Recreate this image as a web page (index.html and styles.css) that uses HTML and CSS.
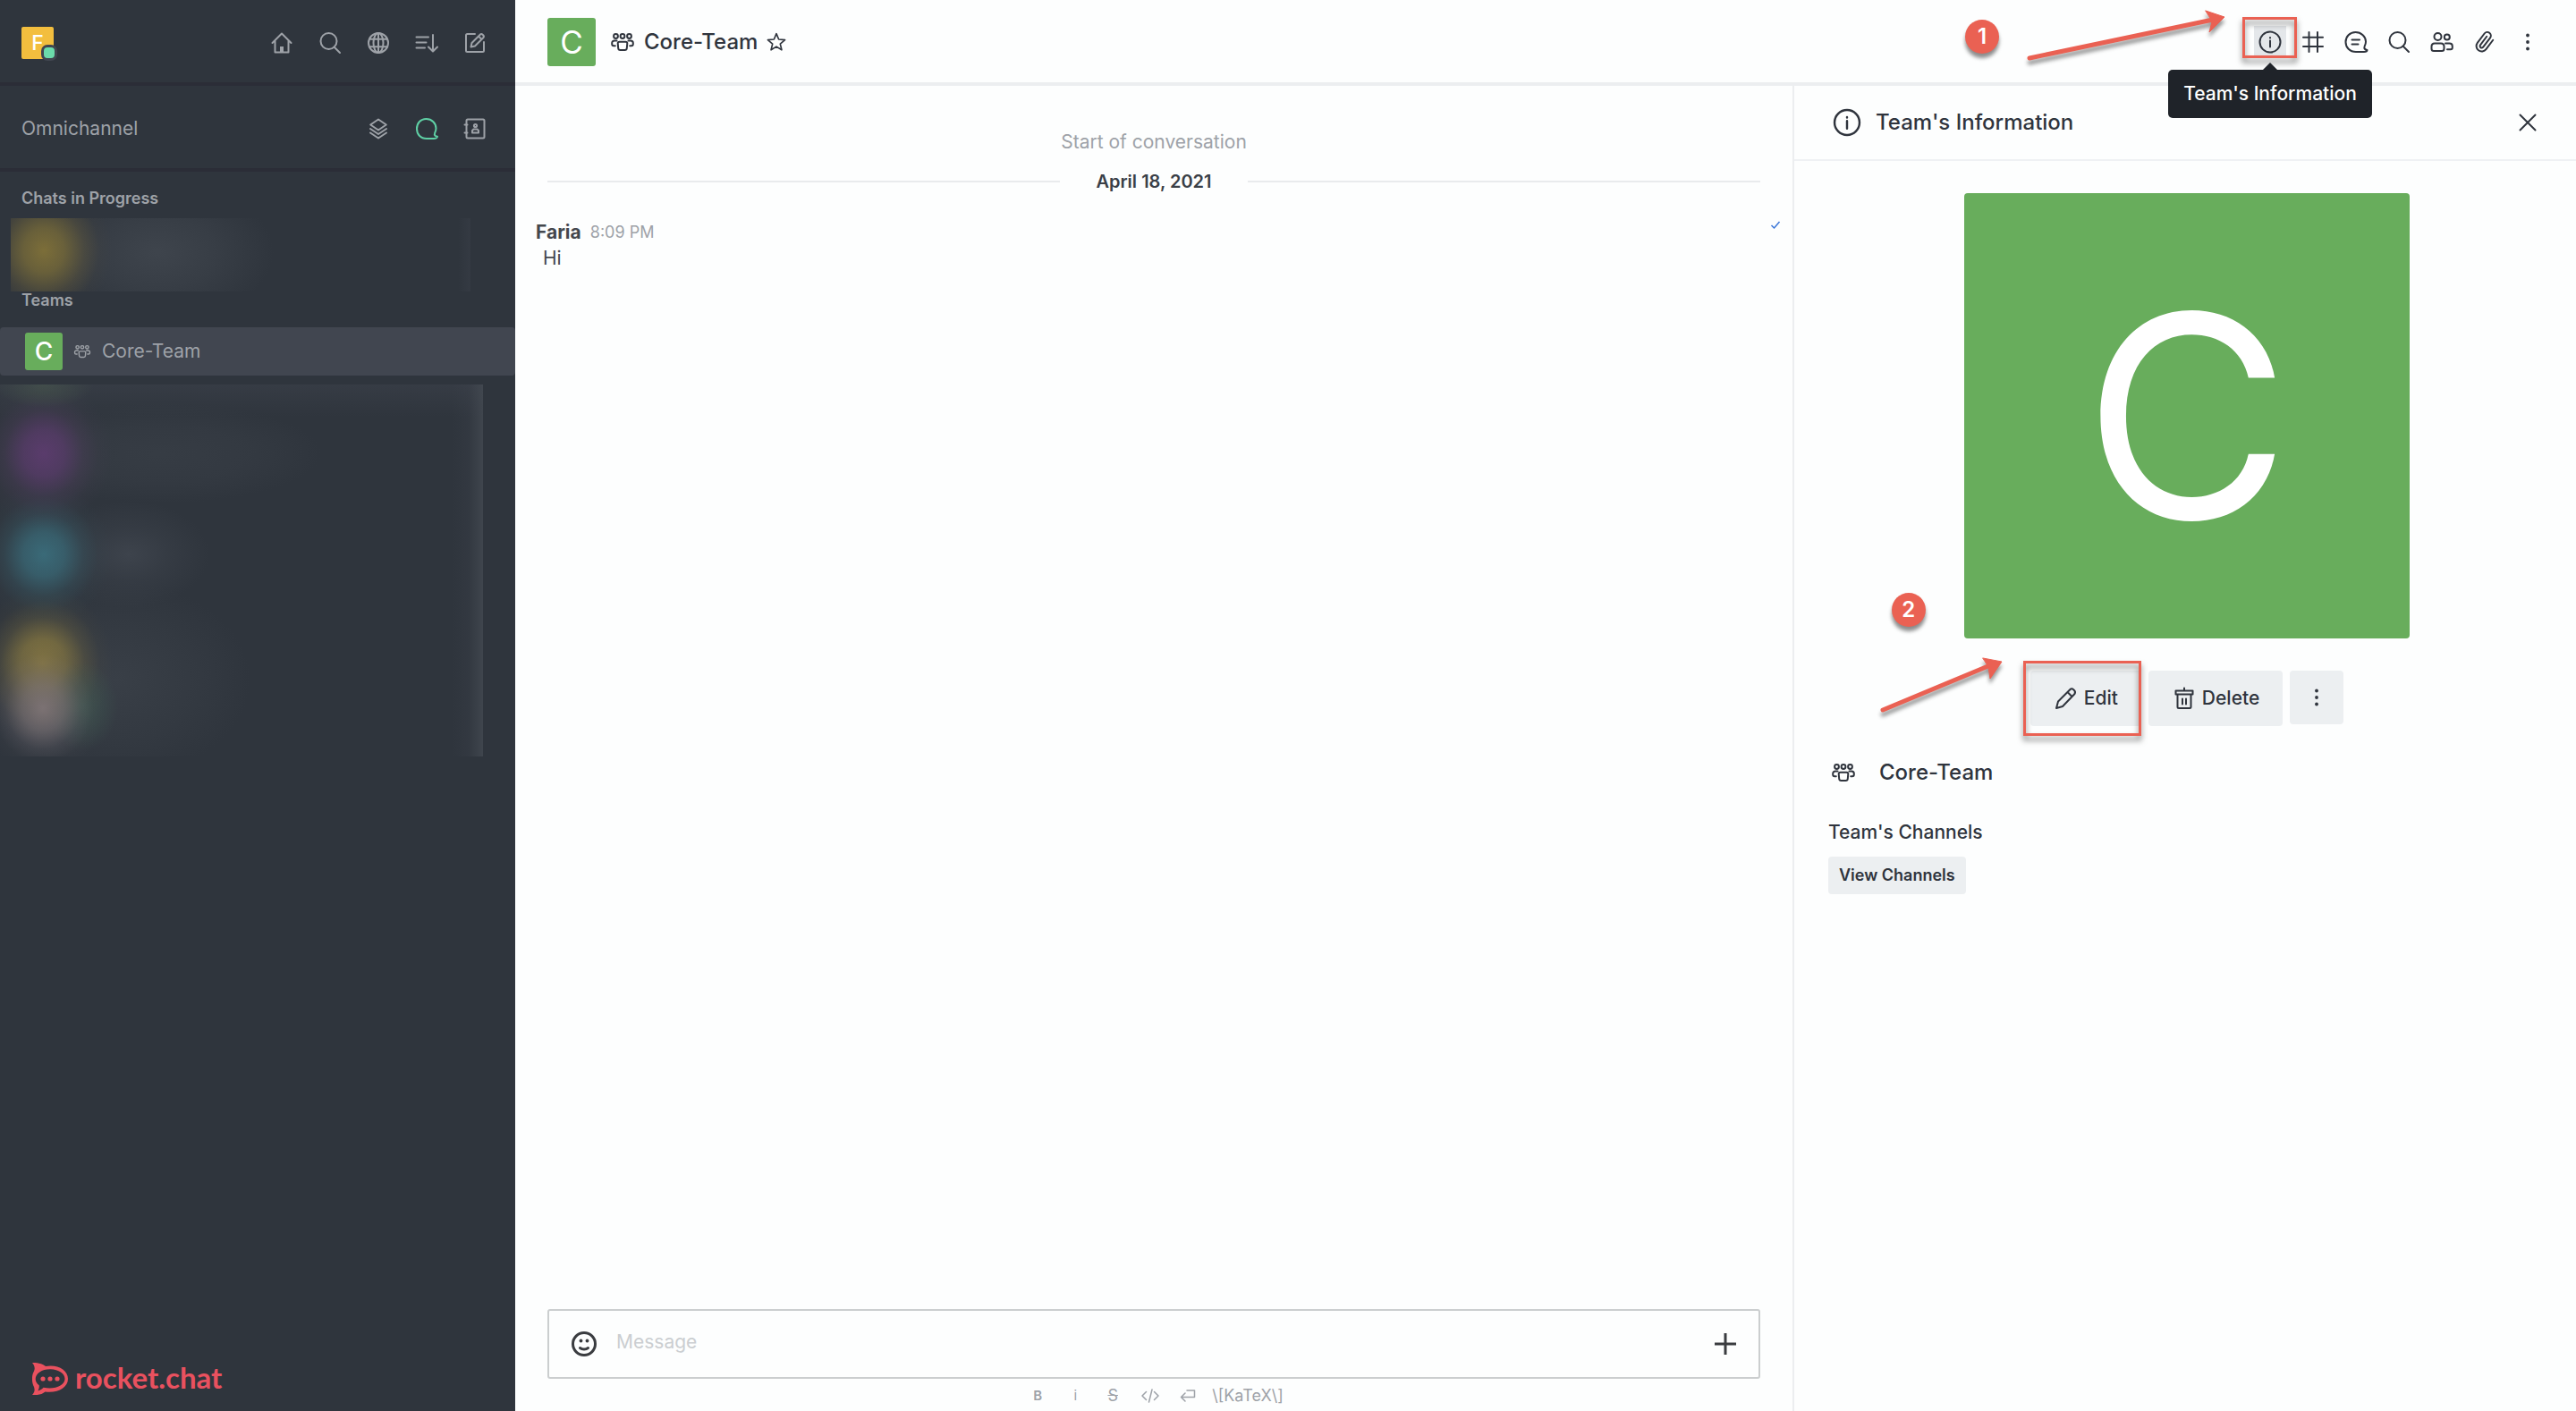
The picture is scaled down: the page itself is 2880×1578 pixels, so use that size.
FILE: index.html
```
<!DOCTYPE html>
<html lang="en">
<head>
<meta charset="utf-8">
<meta name="viewport" content="width=device-width, initial-scale=1">
<title>Core-Team</title>
<link rel="stylesheet" href="styles.css">
</head>
<body>
<svg class="sprite" aria-hidden="true">
  <symbol id="team" viewBox="0 0 28 28">
    <circle cx="6.5" cy="7.5" r="2.4"/><circle cx="14" cy="7.5" r="2.4"/><circle cx="21.5" cy="7.5" r="2.4"/>
    <path d="M10.5 13.8h7c1.200 0 1.800.6 1.800 1.600l-.5 5.600c-.1 1.400-1 2-2.300 2h-5c-1.300 0-2.200-.6-2.300-2l-.5-5.600c0-1 .6-1.600 1.800-1.600zM7.500 12.500H5c-1.800 0-2.800 1-2.800 2.600v1.200c0 1.300.8 2 2 2h1.600M20.500 12.500H23c1.800 0 2.800 1 2.800 2.600v1.200c0 1.300-.8 2-2 2h-1.600"/>
  </symbol>
  <symbol id="search" viewBox="0 0 28 28"><circle cx="12.500" cy="12" r="9"/><path d="M18.500 18.500l6.500 6.500"/></symbol>
  <symbol id="info" viewBox="0 0 28 28"><circle cx="14" cy="14" r="11.500"/><path d="M14 12.500v7M14 9v.4"/></symbol>
  <symbol id="kebab" viewBox="0 0 28 28"><g fill="currentColor" stroke="none"><circle cx="14" cy="6.500" r="1.900"/><circle cx="14" cy="14" r="1.900"/><circle cx="14" cy="21.500" r="1.900"/></g></symbol>
</svg>

<div class="app">
  <aside class="sidebar">
    <header class="side-bar">
      <button class="me" aria-label="My account">F<span class="presence"></span></button>
      <nav class="side-tools">
        <button aria-label="Home"><svg class="icon" viewBox="0 0 28 28"><path d="M3.500 14L14 3.500 24.500 14M6.500 12v12.500h15V12"/><path d="M12 24.500v-6.500h4v6.500z" fill="currentColor" stroke="none"/></svg></button>
        <button aria-label="Search"><svg class="icon"><use href="#search"/></svg></button>
        <button aria-label="Directory"><svg class="icon" viewBox="0 0 28 28"><circle cx="14" cy="14" r="11"/><ellipse cx="14" cy="14" rx="5.500" ry="11"/><path d="M14 3v22M4 9.800h20M4 18.200h20"/></svg></button>
        <button aria-label="Sort"><svg class="icon" viewBox="0 0 28 28"><path d="M2.500 7.500h13.500M2.500 13.500h11M2.500 19.500h9.500M21 5v18M16 18.500l5 5 5-5"/></svg></button>
        <button aria-label="Create new"><svg class="icon" viewBox="0 0 28 28"><path d="M14 4H5.500C4.500 4 4 4.500 4 5.500v17c0 1 .5 1.500 1.500 1.500h17c1 0 1.500-.5 1.500-1.500V13M9.500 18.500l1-4.500L20 4.500c1.500-1.500 5 1.500 3.500 3.500L14 17.500zM18 6.500l3.500 3.500"/></svg></button>
      </nav>
    </header>
    <section class="side-bar">
      <h2 class="omni">Omnichannel</h2>
      <nav class="side-tools">
        <button aria-label="Queue"><svg class="icon" viewBox="0 0 28 28"><path d="M14 3.500l8.800 6L14 15.500l-8.800-6zM5 14l9 6 9-6M5 18.500l9 6 9-6"/></svg></button>
        <button class="on" aria-label="Available for chats"><svg class="icon" viewBox="0 0 28 28"><path d="M13.500 3C7 3 3 8 3 14s4 11 11 11h8c2 0 4-1 4-2.200-2-.3-4-1.300-2.800-4.300C24 17 24.500 15 24.500 13.500 24.500 8 20 3 13.500 3z"/></svg></button>
        <button aria-label="Contacts"><svg class="icon" viewBox="0 0 28 28"><rect x="4.500" y="3.500" width="20" height="21" rx="1.500"/><path d="M2.500 9.500h3M2.500 18.500h3"/><circle cx="14.500" cy="10.500" r="1.600"/><path d="M12.500 14.500h4l1.500 1.500v2.500h-7V16z"/></svg></button>
      </nav>
    </section>
    <div class="rooms">
      <h3 class="group">Chats in Progress</h3>
      <div class="redacted one"></div>
      <h3 class="group">Teams</h3>
      <a class="room" href="#core-team">
        <span class="avatar small">C</span>
        <svg class="icon tiny"><use href="#team"/></svg>
        <span>Core-Team</span>
      </a>
      <div class="redacted many"></div>
    </div>
    <footer class="brand">
      <svg class="logo" viewBox="0 0 40 36" aria-hidden="true"><path fill-rule="evenodd" fill="currentColor" d="M0 0C6-.4 12 1.500 15 4 28 1.500 40 8 40 18S28 34.500 14.500 32.500C11 35.500 6 36.500 0 36c3-3 3-6 2-9C-.8 22-.8 14 2 9.500 3.500 6 2.500 3 0 0zM20.500 7.200C11 7 3.700 12 3.700 18c0 3 1.500 5.500 4 7.200.4 2.200-.2 4.200-1.300 6.300 2.800-.6 4.500-2 6.200-3.700C25 30.500 36.500 25.500 36.500 18c0-6-7-10.700-16-10.800z"/><g fill="currentColor"><circle cx="12" cy="18" r="2.600"/><circle cx="20" cy="18" r="2.600"/><circle cx="28" cy="18" r="2.600"/></g></svg>
      <span>rocket.chat</span>
    </footer>
  </aside>

  <main class="main">
    <header class="room-head">
      <span class="avatar medium">C</span>
      <div class="room-title">
        <svg class="icon"><use href="#team"/></svg>
        <h1>Core-Team</h1>
        <button aria-label="Favorite"><svg class="icon star" viewBox="0 0 20 20"><path d="M10 1.500l2.400 5.800 6.300.5-4.800 4.100 1.500 6.100L10 14.700 4.600 18l1.500-6.100L1.300 7.800l6.300-.5z"/></svg></button>
      </div>
      <span class="marker first">1</span>
      <svg class="arrow first" viewBox="0 0 240 80" aria-hidden="true"><path d="M9 65L214 22" stroke-width="5"/><path class="tip" d="M206 12l21 7-17 17 3-12z"/></svg>
      <nav class="room-tools">
        <button class="active" aria-label="Team's Information" aria-describedby="tip"><svg class="icon"><use href="#info"/></svg><span class="frame info-frame"></span><span class="tooltip" id="tip" role="tooltip">Team's Information</span></button>
        <button aria-label="Channels"><svg class="icon" viewBox="0 0 28 28"><path d="M9.500 3v22M19 3v22M3 8.700h22M3 19h22"/></svg></button>
        <button aria-label="Threads"><svg class="icon" viewBox="0 0 28 28"><path d="M13.500 3C7 3 2.500 8 2.500 14s4.500 11 11.500 11h9c2 0 3.500-.8 3.500-2-2-.3-4-1.500-2.800-4.500.8-1.500 1.300-3.500 1.300-5C25 8 20 3 13.500 3zM9.500 11.500h8.500M9.500 16.500h7"/></svg></button>
        <button aria-label="Search messages"><svg class="icon"><use href="#search"/></svg></button>
        <button aria-label="Members"><svg class="icon" viewBox="0 0 28 28"><circle cx="9.500" cy="8" r="4"/><circle cx="19.800" cy="8.500" r="3"/><path d="M6 15.500h7c2.300 0 3.500 1.200 3.500 3.500v2.500c0 1.500-1 2.500-2.500 2.500H5c-1.500 0-2.500-1-2.500-2.500V19c0-2.300 1.200-3.500 3.500-3.500zM18 15.500h4.500c2 0 3.300 1.200 3.300 3.200v1.500c0 1.300-.8 2-2 2H20"/></svg></button>
        <button aria-label="Files"><svg class="icon" viewBox="0 0 28 28"><path transform="rotate(-8 14 14) translate(2 2)" d="M21.440 11.050l-9.190 9.190a6 6 0 0 1-8.490-8.490l9.190-9.190a4 4 0 0 1 5.660 5.660l-9.200 9.190a2 2 0 0 1-2.830-2.830l8.490-8.480"/></svg></button>
        <button aria-label="More"><svg class="icon"><use href="#kebab"/></svg></button>
      </nav>
    </header>

    <section class="chat">
      <p class="start">Start of conversation</p>
      <div class="day"><span>April 18, 2021</span></div>
      <article class="message">
        <div class="message-head">
          <strong>Faria</strong><time>8:09 PM</time>
          <svg class="read" viewBox="0 0 12 12" aria-label="Read"><path d="M1.500 6l3 3 6-7"/></svg>
        </div>
        <p>Hi</p>
      </article>
      <form class="composer">
        <button type="button" aria-label="Emoji"><svg class="icon bold" viewBox="0 0 28 28"><circle cx="14" cy="14" r="12.500"/><path d="M9.500 18.500c2.500 2 6.500 2 9 0"/><g fill="currentColor" stroke="none"><circle cx="10.500" cy="10.500" r="1.900"/><circle cx="17.500" cy="10.500" r="1.900"/></g></svg></button>
        <input type="text" placeholder="Message" aria-label="Message">
        <button type="button" aria-label="Add"><svg class="icon plus bold" viewBox="0 0 24 24"><path d="M12 0v24M0 12h24"/></svg></button>
      </form>
      <div class="format">
        <button aria-label="Bold"><b>B</b></button>
        <button aria-label="Italic">i</button>
        <button aria-label="Strike"><s>S</s></button>
        <button aria-label="Code"><svg class="icon mini" viewBox="0 0 20 16"><path d="M5.500 3.500L1 8l4.500 4.500M14.500 3.500L19 8l-4.500 4.500M12 1L8.500 15"/></svg></button>
        <button aria-label="Multi-line"><svg class="icon mini" viewBox="0 0 20 16"><path d="M9 2h8.500v7.500H3M7 5L2.500 9.500 7 14"/></svg></button>
        <a href="#katex">\[KaTeX\]</a>
      </div>
    </section>

    <aside class="panel">
      <header class="panel-head">
        <svg class="icon big"><use href="#info"/></svg>
        <h2>Team's Information</h2>
        <button aria-label="Close"><svg class="icon" viewBox="0 0 28 28"><path d="M5.500 5.500l17 17M22.500 5.500l-17 17"/></svg></button>
      </header>
      <div class="panel-body">
        <span class="avatar large">C</span>
        <div class="actions">
          <span class="marker second">2</span>
          <svg class="arrow second" viewBox="0 0 160 85" aria-hidden="true"><path d="M10 69L130 19" stroke-width="5"/><path class="tip" d="M122 11l21 4-13 19-2-13z"/></svg>
          <button class="btn"><svg class="icon" viewBox="0 0 28 28"><path d="M3 25l2-7.500L18.500 4c2-2 7 1.500 5 5L10 23zM15.500 7l5 5"/></svg>Edit<span class="frame edit-frame"></span></button>
          <button class="btn"><svg class="icon" viewBox="0 0 28 28"><path d="M4.500 5.500h19v4h-19zM6.500 9.500v14c0 1 .5 1.500 1.500 1.500h12c1 0 1.500-.5 1.500-1.500v-14M14 5.500v-3M12 14.500v6M16 14.500v6"/></svg>Delete</button>
          <button class="btn square" aria-label="More"><svg class="icon"><use href="#kebab"/></svg></button>
        </div>
        <div class="team-name"><svg class="icon"><use href="#team"/></svg><h3>Core-Team</h3></div>
        <h4>Team's Channels</h4>
        <button class="btn compact">View Channels</button>
      </div>
    </aside>
  </main>
</div>
</body>
</html>
```
FILE: styles.css
```
* { box-sizing: border-box; }
body {
  margin: 0;
  font-family: Inter, "Liberation Sans", sans-serif;
  font-size: 21px;
  line-height: 28px;
  color: #2f343d;
  background: #fdfefe;
}
h1, h2, h3, h4, p { margin: 0; font-size: inherit; font-weight: inherit; }
button {
  position: relative;
  display: flex;
  align-items: center;
  justify-content: center;
  padding: 0;
  border: 0;
  background: none;
  color: inherit;
  font: inherit;
}
a { color: inherit; text-decoration: none; }
.sprite { display: none; }
.icon {
  flex: none;
  width: 28px;
  height: 28px;
  fill: none;
  stroke: currentColor;
  stroke-width: 2;
  stroke-linecap: round;
  stroke-linejoin: round;
}
.icon.tiny { width: 20px; height: 20px; }
.icon.big { width: 34px; height: 34px; }
.icon.star { width: 22px; height: 22px; stroke-width: 1.5; }
.icon.bold { stroke-width: 3; }
.icon.plus { width: 24px; height: 24px; stroke-linecap: butt; }
.icon.mini { width: 20px; height: 16px; stroke-width: 1.5; }

.app { display: grid; grid-template-columns: 576px 1fr; min-height: 100vh; }

/* Sidebar */
.sidebar {
  display: flex;
  flex-direction: column;
  background: #2f353d;
  color: #9ea2a8;
}
.side-bar {
  display: flex;
  align-items: center;
  justify-content: space-between;
  height: 96px;
  padding: 3px 31px 0 24px;
  border-bottom: 4px solid #2b2d37;
}
.side-tools { display: flex; gap: 26px; }
.side-tools .on { color: #5fd0a5; }
.me {
  width: 36px;
  height: 36px;
  border-radius: 2px;
  background: #f3be3e;
  color: #fff;
  font-size: 23px;
  font-weight: 500;
}
.presence {
  position: absolute;
  right: -4px;
  bottom: -2px;
  width: 18px;
  height: 18px;
  border: 3px solid #414650;
  border-radius: 7px;
  background: #6bdcab;
}
.rooms { padding-top: 20px; }
.group {
  padding-left: 24px;
  font-size: 18px;
  font-weight: 600;
  line-height: 20px;
}
.room {
  display: flex;
  align-items: center;
  gap: 12px;
  height: 54px;
  margin-top: 20px;
  padding-left: 28px;
  border-radius: 4px;
  background: #414650;
}
.redacted.one {
  height: 82px;
  margin: 12px 50px 0 12px;
  background:
    linear-gradient(to left, rgba(65, 70, 80, .3), rgba(65, 70, 80, 0) 14px),
    radial-gradient(76px 82px at 37px 36px, rgba(124, 110, 57, 1), rgba(124, 110, 57, .75) 30%, rgba(110, 98, 60, .35) 60%, rgba(80, 75, 62, .12) 82%, rgba(70, 68, 62, 0)),
    radial-gradient(130px 80px at 164px 38px, rgba(64, 70, 78, .9), rgba(64, 70, 78, .5) 50%, rgba(64, 70, 78, 0));
}
.redacted.many {
  height: 416px;
  margin: 10px 36px 0 0;
  background:
    linear-gradient(to left, rgba(70, 76, 84, .7), rgba(65, 70, 80, .2) 16px, rgba(65, 70, 80, 0) 34px),
    linear-gradient(rgba(65, 70, 80, .4), rgba(65, 70, 80, 0) 36px),
    radial-gradient(56px 26px at 49px 0, rgba(74, 94, 76, .7), rgba(74, 94, 76, 0)),
    radial-gradient(76px 84px at 49px 77px, rgba(90, 60, 108, 1), rgba(90, 60, 108, .75) 30%, rgba(80, 62, 94, .35) 58%, rgba(72, 62, 84, .12) 80%, rgba(66, 60, 78, 0)),
    radial-gradient(76px 80px at 49px 190px, rgba(58, 106, 120, 1), rgba(58, 106, 120, .75) 30%, rgba(56, 90, 102, .38) 58%, rgba(54, 76, 86, .12) 80%, rgba(54, 70, 80, 0)),
    radial-gradient(68px 74px at 48px 362px, rgba(126, 116, 118, .95), rgba(122, 114, 118, .65) 34%, rgba(104, 100, 108, .28) 62%, rgba(80, 80, 86, .1) 82%, rgba(70, 72, 78, 0)),
    radial-gradient(40px 50px at 92px 360px, rgba(64, 96, 84, .6), rgba(64, 90, 84, 0)),
    radial-gradient(78px 86px at 48px 312px, rgba(136, 120, 64, 1), rgba(134, 119, 64, .75) 32%, rgba(110, 100, 63, .36) 60%, rgba(84, 80, 62, .12) 82%, rgba(70, 68, 60, 0)),
    radial-gradient(180px 56px at 180px 77px, rgba(56, 62, 70, .8), rgba(56, 62, 70, .5) 55%, rgba(58, 64, 72, 0)),
    radial-gradient(90px 60px at 144px 190px, rgba(62, 68, 77, .95), rgba(62, 68, 77, .4) 50%, rgba(64, 70, 80, 0)),
    radial-gradient(150px 110px at 130px 330px, rgba(58, 64, 72, .9), rgba(58, 64, 72, .4) 60%, rgba(60, 66, 76, 0));
}
.brand {
  display: flex;
  align-items: center;
  gap: 8px;
  margin-top: auto;
  padding: 0 36px 18px;
  color: #e9515f;
  font-family: Lato, sans-serif;
  font-size: 33px;
  font-weight: 700;
  line-height: 36px;
}
.brand span { padding-bottom: 4px; line-height: 32px; }
.logo { width: 40px; height: 36px; }

/* Avatars */
.avatar {
  display: flex;
  flex: none;
  align-items: center;
  justify-content: center;
  border-radius: 3px;
  background: #68ad5c;
  color: #fff;
}
.avatar.small { width: 42px; height: 42px; font-size: 28px; font-weight: 500; }
.avatar.medium { width: 54px; height: 54px; font-size: 35px; }
.avatar.large {
  width: 498px;
  height: 498px;
  margin: 0 auto;
  border-radius: 4px;
  font-size: 316px;
}

/* Room header */
.main {
  display: grid;
  grid-template: auto 1fr / 1fr 876px;
  min-width: 0;
}
.room-head {
  position: relative;
  grid-column: 1 / -1;
  display: flex;
  align-items: center;
  gap: 16px;
  padding: 20px 36px 18px;
  border-bottom: 4px solid #eceef0;
}
.room-title { display: flex; align-items: center; gap: 10px; }
.room-title h1, .panel-head h2, .team-name h3 { font-size: 24px; font-weight: 500; line-height: 32px; }
.room-tools { display: flex; gap: 12px; margin-left: auto; }
.room-tools button { width: 36px; height: 36px; }
.room-tools .active { background: #e4e7ea; }
.tooltip {
  position: absolute;
  z-index: 2;
  top: 49px;
  left: -96px;
  width: 228px;
  border-radius: 5px;
  background: #1f2329;
  color: #fff;
  font-weight: 500;
  line-height: 54px;
  text-align: center;
}
.tooltip::before {
  content: "";
  position: absolute;
  top: -8px;
  left: 105px;
  border: 9px solid transparent;
  border-top: 0;
  border-bottom: 9px solid #1f2329;
}

/* Callouts */
.marker {
  position: absolute;
  width: 38px;
  height: 38px;
  border-radius: 50%;
  background: #ea6153;
  box-shadow: 0 5px 4px rgba(0, 0, 0, .45);
  color: #fff;
  font-size: 24px;
  font-weight: 600;
  line-height: 38px;
  text-align: center;
}
.marker.first { top: 22px; right: 645px; }
.marker.second { top: -87px; left: -155px; }
.arrow {
  position: absolute;
  fill: none;
  stroke: #ea6153;
  stroke-linecap: round;
  filter: drop-shadow(0 5px 2px rgba(0, 0, 0, .4));
}
.arrow .tip { fill: #ea6153; stroke-width: 1; }
.arrow.first { top: 0; right: 380px; width: 240px; height: 80px; }
.arrow.second { top: -25px; left: -175px; width: 160px; height: 85px; }
.frame {
  position: absolute;
  z-index: 1;
  border: 3px solid #ea6153;
  filter: drop-shadow(0 5px 3px rgba(0, 0, 0, .5));
}
.info-frame { inset: -10px -12px 0 -13px; }
.edit-frame { inset: -11px 0 -11px -8px; }

/* Conversation */
.chat { display: flex; flex-direction: column; padding-top: 48px; }
.start { color: #9ea2a8; line-height: 30px; text-align: center; }
.day {
  display: flex;
  align-items: center;
  gap: 40px;
  margin: 16px 36px 30px;
  color: #3a3f47;
  font-size: 20px;
  font-weight: 600;
  line-height: 26px;
}
.day::before, .day::after { content: ""; flex: 1; height: 2px; background: #e9ebed; }
.message { padding: 0 13px 0 23px; color: #44474d; }
.message-head { display: flex; align-items: center; gap: 10px; }
.message strong { font-weight: 700; }
.message time { color: #9ea2a8; font-size: 18px; }
.message p { padding-left: 8px; line-height: 30px; }
.read {
  align-self: flex-start;
  width: 12px;
  height: 12px;
  margin-left: auto;
  fill: none;
  stroke: #3d78d8;
  stroke-width: 1.5;
}
.composer {
  display: flex;
  align-items: center;
  gap: 22px;
  height: 78px;
  margin: auto 36px 0;
  padding: 0 25px;
  border: 2px solid #cbcecf;
  border-radius: 3px;
  color: #3a3c40;
}
.composer input {
  flex: 1;
  padding: 0 0 4px;
  border: 0;
  outline: 0;
  background: none;
  color: inherit;
  font: inherit;
}
.composer input::placeholder { color: #cbced1; opacity: 1; }
.format {
  display: flex;
  align-items: center;
  justify-content: center;
  gap: 12px;
  height: 36px;
  padding-top: 2px;
  color: #9ea2a8;
  font-size: 18px;
}
.format button { width: 30px; height: 24px; font-size: 15px; }
.format b { font-weight: 600; }
.format s { font-size: 18px; }

/* Contextual panel */
.panel { border-left: 2px solid #eceef0; }
.panel-head {
  display: flex;
  align-items: center;
  height: 84px;
  padding: 0 40px 0 42px;
  border-bottom: 2px solid #eff1f4;
}
.panel-head h2 { flex: 1; padding-left: 15px; }
.panel-body { padding: 36px 34px 0 38px; }
.actions {
  position: relative;
  display: flex;
  align-items: flex-start;
  gap: 8px;
  width: max-content;
  margin: 36px auto 0;
}
.btn {
  gap: 6px;
  height: 62px;
  padding: 0 26px;
  border-radius: 4px;
  background: #eceff1;
  font-weight: 500;
}
.btn.square { width: 60px; height: 60px; padding: 0; }
.btn.compact { height: 42px; padding: 0 12px; font-size: 18px; font-weight: 600; }
.team-name { display: flex; align-items: center; gap: 26px; margin-top: 36px; padding-left: 3px; }
.panel-body h4 { margin: 36px 0 12px; font-weight: 500; line-height: 30px; }
```
